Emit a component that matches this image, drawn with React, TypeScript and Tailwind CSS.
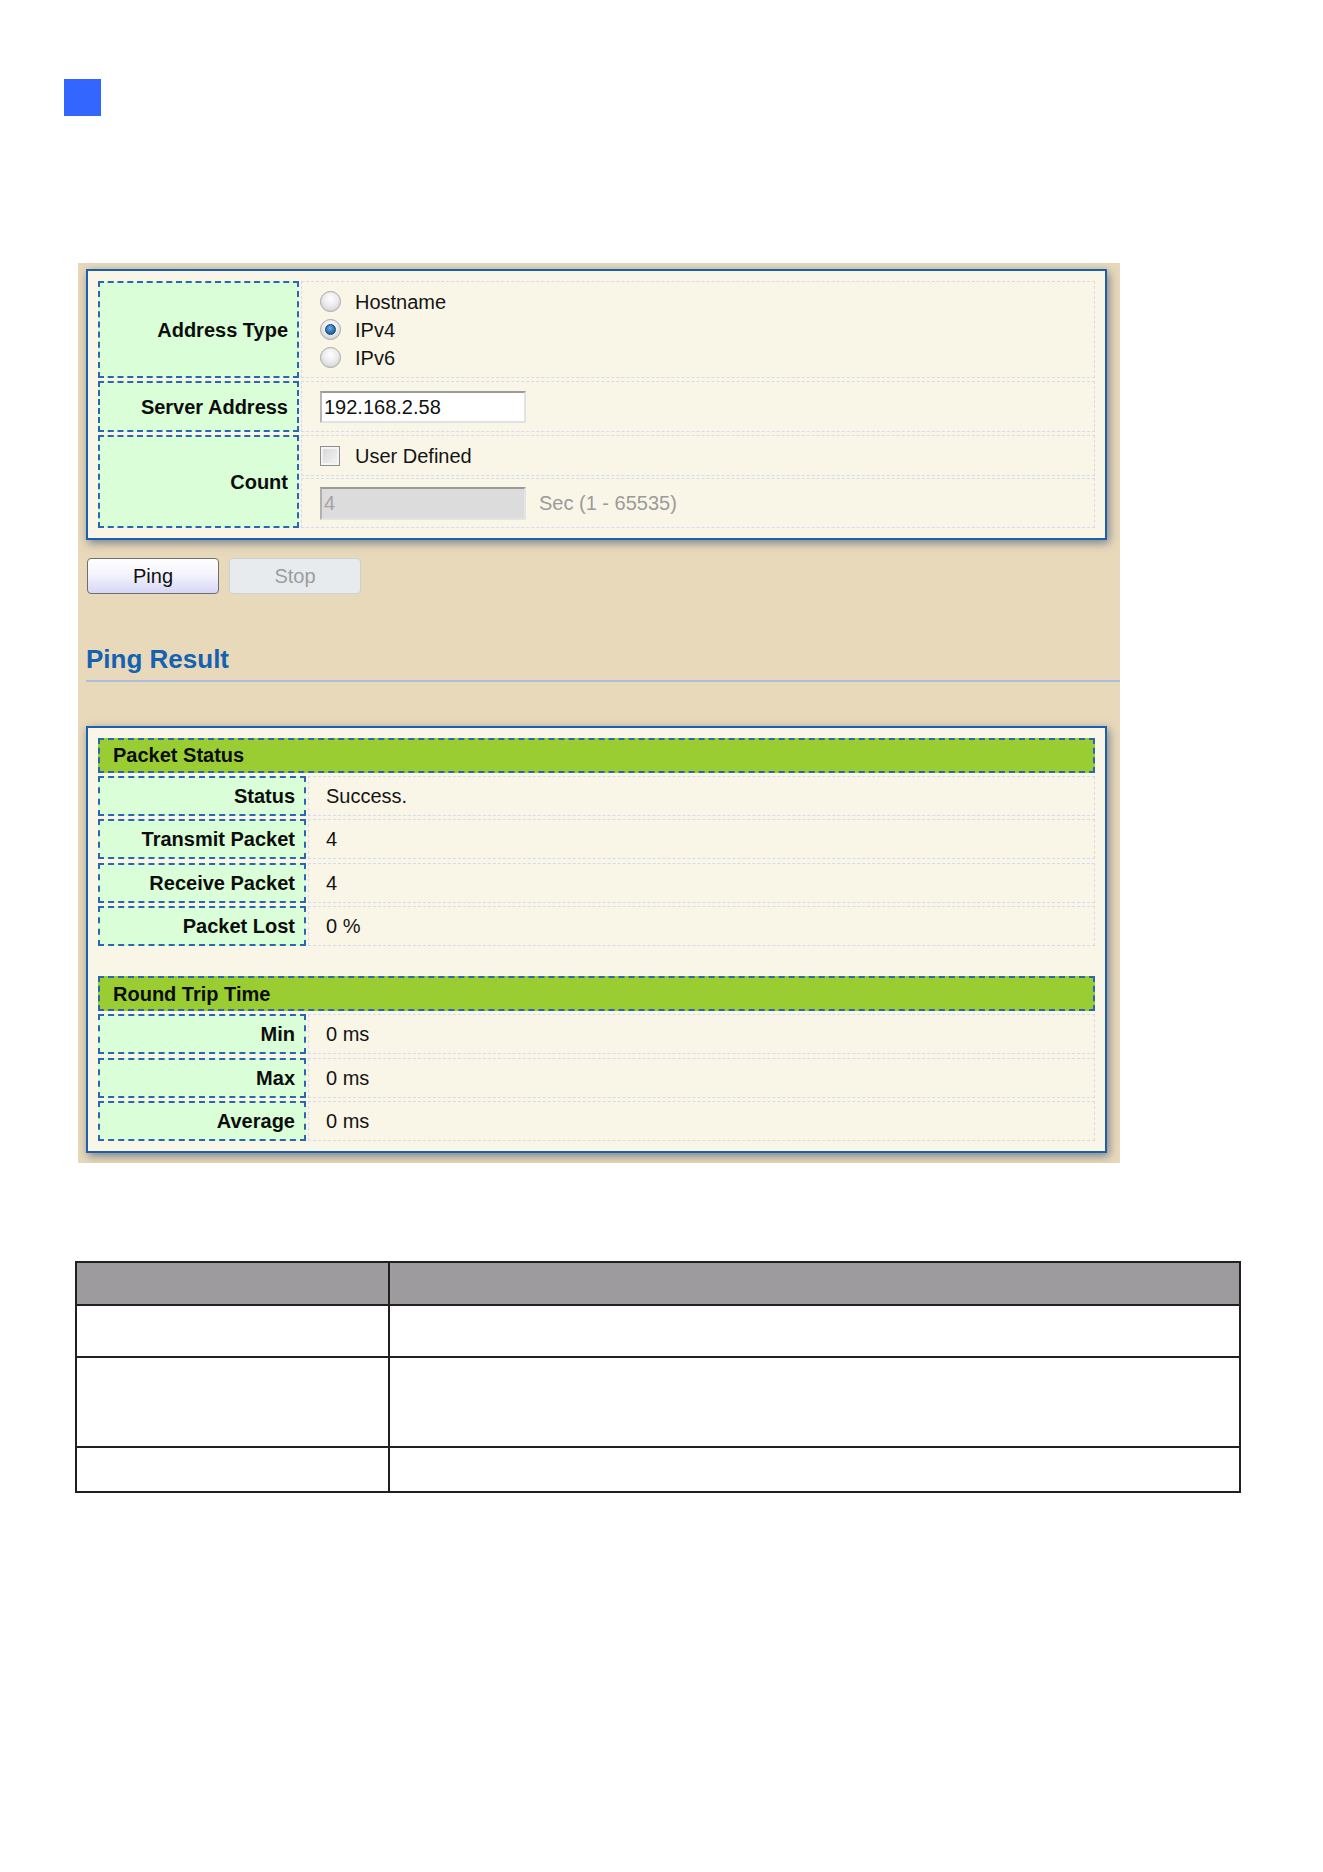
import React from "react";

const labelCls =
  "flex items-center justify-end pr-[9px] bg-[#d9fed8] border-2 border-dashed border-[#2b66b1] font-bold text-[20px] text-[#0d0d0d]";
const valueCls = "flex-1 border border-dashed border-[#d6daee]";

function Radio({ checked }: { checked?: boolean }) {
  return (
    <span className="w-[21px] h-[21px] rounded-full border border-[#a6a6a6] bg-[radial-gradient(circle_at_50%_35%,#ffffff_0%,#ececec_45%,#c8c8c8_100%)] flex items-center justify-center shrink-0">
      {checked && (
        <span className="w-[11px] h-[11px] rounded-full border border-[#1d3f66] bg-[radial-gradient(circle_at_45%_35%,#6fb4ea_0%,#2b77bd_50%,#174b82_100%)]" />
      )}
    </span>
  );
}

function ResultRow({ label, value }: { label: string; value: string }) {
  return (
    <div className="flex h-[40px] gap-[2px]">
      <div className={labelCls + " w-[208px]"}>{label}</div>
      <div className={valueCls + " flex items-center pl-[17px] text-[20px] text-[#141414]"}>{value}</div>
    </div>
  );
}

function SectionHeader({ title }: { title: string }) {
  return (
    <div className="h-[35px] bg-[#9acd32] border-2 border-dashed border-[#2b66b1] flex items-center pl-[13px] font-bold text-[20px] text-[#0d0d0d]">
      {title}
    </div>
  );
}

export default function App() {
  return (
    <div className="w-[1323px] h-[1872px] bg-white font-['Liberation_Sans',Arial,sans-serif] flex flex-col items-start">
      <div className="mt-[79px] ml-[64px] w-[37px] h-[37px] bg-[#3366ff]" />

      {/* Screenshot panel */}
      <div className="mt-[147px] ml-[78px] w-[1042px] h-[900px] bg-[#e9d9bb] overflow-hidden pt-[6px] pl-[8px] pr-[13px] flex flex-col">
        {/* Box 1 */}
        <div className="w-[1021px] border-2 border-[#1c5fae] bg-[#faf6e7] p-[10px] shadow-[2px_3px_9px_rgba(45,70,105,0.6)] flex flex-col gap-[3px]">
          <div className="flex h-[97px] gap-[2px]">
            <div className={labelCls + " w-[201px]"}>Address Type</div>
            <div className={valueCls + " flex flex-col justify-center pl-[18px] text-[20px] text-[#141414]"}>
              <div className="flex items-center gap-[14px] h-[28px]">
                <Radio />
                <span>Hostname</span>
              </div>
              <div className="flex items-center gap-[14px] h-[28px]">
                <Radio checked />
                <span>IPv4</span>
              </div>
              <div className="flex items-center gap-[14px] h-[28px]">
                <Radio />
                <span>IPv6</span>
              </div>
            </div>
          </div>
          <div className="flex h-[51px] gap-[2px]">
            <div className={labelCls + " w-[201px]"}>Server Address</div>
            <div className={valueCls + " flex items-center pl-[18px]"}>
              <div className="w-[206px] h-[32px] bg-white border-2 border-t-[#9b9b9b] border-l-[#b5b5b5] border-r-[#e2e2e2] border-b-[#e2e2e2] flex items-center pl-[2px] text-[20px] text-[#111]">
                192.168.2.58
              </div>
            </div>
          </div>
          <div className="flex h-[93px] gap-[2px]">
            <div className={labelCls + " w-[201px]"}>Count</div>
            <div className="flex-1 flex flex-col gap-[2px]">
              <div className={valueCls + " flex items-center pl-[18px] gap-[15px] text-[20px] text-[#141414]"}>
                <span className="w-[20px] h-[20px] border border-[#8e8e8e] bg-[linear-gradient(135deg,#d4d4d4,#f7f7f7)] shadow-[inset_0_0_0_2px_#f4f4f4] shrink-0" />
                <span>User Defined</span>
              </div>
              <div className={valueCls + " flex items-center pl-[18px] gap-[13px] h-[50px] flex-none"}>
                <div className="w-[206px] h-[33px] bg-[#dcdcdc] border-2 border-t-[#9a9a9a] border-l-[#b0b0b0] border-r-[#e4e4e4] border-b-[#e4e4e4] flex items-center pl-[2px] text-[20px] text-[#a3a3a3]">
                  4
                </div>
                <span className="text-[20px] text-[#9b9b9b]">Sec (1 - 65535)</span>
              </div>
            </div>
          </div>
        </div>

        {/* Buttons */}
        <div className="mt-[18px] ml-[1px] flex gap-[10px]">
          <div className="w-[132px] h-[36px] rounded-[4px] border border-[#6e6e6e] bg-[linear-gradient(#ffffff_0%,#f4f4fd_45%,#d6d6f6_100%)] flex items-center justify-center text-[20px] text-[#111]">
            Ping
          </div>
          <div className="w-[132px] h-[36px] rounded-[4px] border border-[#cbd0d4] bg-[#e7ebee] flex items-center justify-center text-[20px] text-[#9d9d9d]">
            Stop
          </div>
        </div>

        {/* Ping Result */}
        <div className="mt-[50px] leading-[30px] text-[26px] font-bold text-[#1462b1]">Ping Result</div>
        <div className="mt-[6px] h-[1.5px] bg-[#adbde0] mr-[-13px]" />

        {/* Box 2 */}
        <div className="mt-[44px] w-[1021px] border-2 border-[#1c5fae] bg-[#faf6e7] p-[10px] shadow-[2px_3px_9px_rgba(45,70,105,0.6)] flex flex-col">
          <SectionHeader title="Packet Status" />
          <div className="mt-[3px] flex flex-col gap-[3.5px]">
            <ResultRow label="Status" value="Success." />
            <ResultRow label="Transmit Packet" value="4" />
            <ResultRow label="Receive Packet" value="4" />
            <ResultRow label="Packet Lost" value="0 %" />
          </div>
          <div className="mt-[30px]">
            <SectionHeader title="Round Trip Time" />
          </div>
          <div className="mt-[3px] flex flex-col gap-[3.5px]">
            <ResultRow label="Min" value="0 ms" />
            <ResultRow label="Max" value="0 ms" />
            <ResultRow label="Average" value="0 ms" />
          </div>
        </div>
      </div>

      {/* Table */}
      <div className="mt-[98px] ml-[75px] w-[1166px] border-2 border-[#231f20] flex flex-col">
        <div className="flex h-[43px] bg-[#9d9b9e] border-b-2 border-[#231f20]">
          <div className="w-[313px] border-r-2 border-[#231f20]" />
          <div className="flex-1" />
        </div>
        <div className="flex h-[52px] border-b-2 border-[#231f20]">
          <div className="w-[313px] border-r-2 border-[#231f20]" />
          <div className="flex-1" />
        </div>
        <div className="flex h-[90px] border-b-2 border-[#231f20]">
          <div className="w-[313px] border-r-2 border-[#231f20]" />
          <div className="flex-1" />
        </div>
        <div className="flex h-[43px]">
          <div className="w-[313px] border-r-2 border-[#231f20]" />
          <div className="flex-1" />
        </div>
      </div>
    </div>
  );
}
